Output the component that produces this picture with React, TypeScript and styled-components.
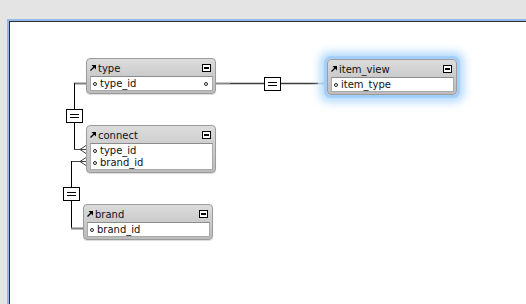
import React from 'react'
import styled, { createGlobalStyle } from 'styled-components'

// canvas content origin in page coordinates (window offset + border)
const OX = 9
const OY = 21

interface ITableField {
  name: string
  /** field is matched on the right side of the box */
  rightKey?: boolean
}

interface ITable {
  title: string
  x: number
  y: number
  fields: ITableField[]
  selected?: boolean
}

const tables: ITable[] = [
  { title: 'type', x: 86, y: 58, fields: [{ name: 'type_id', rightKey: true }] },
  { title: 'connect', x: 86, y: 125, fields: [{ name: 'type_id' }, { name: 'brand_id' }] },
  { title: 'brand', x: 83, y: 204, fields: [{ name: 'brand_id' }] },
  { title: 'item_view', x: 327, y: 59, fields: [{ name: 'item_type' }], selected: true }
]

const GlobalStyle = createGlobalStyle`
  html, body {
    margin: 0;
    padding: 0;
    background: #e4e4e4;
    overflow: hidden;
  }
  body {
    font-family: "DejaVu Sans", "Lucida Grande", sans-serif;
  }
`

const StyledWindow = styled.div`
  width: 526px;
  height: 304px;
  box-sizing: border-box;
  padding: 19px 0 0 7px;
  background: #e4e4e4;
`

const StyledCanvas = styled.div`
  position: relative;
  height: 100%;
  box-sizing: border-box;
  background: #fff;
  border-top: 2px solid #92b9e8;
  border-left: 2px solid #92b9e8;
  box-shadow: inset 1px 1px 0 #2f2f2f;
  overflow: hidden;
`

const StyledLines = styled.svg`
  position: absolute;
  left: 0;
  top: 0;
  width: 100%;
  height: 100%;
`

const StyledTable = styled.div<{ $x: number; $y: number; $selected?: boolean }>`
  position: absolute;
  left: ${(p) => p.$x - OX}px;
  top: ${(p) => p.$y - OY}px;
  width: 130px;
  box-sizing: border-box;
  padding: 0 2px 2px 3px;
  border: 1px solid #9c9c9c;
  border-radius: 4px;
  background: linear-gradient(#dcdcdc, #c9c9c9 55%, #bcbcbc);
  box-shadow: ${(p) => p.$selected
    ? '0 0 1px 3px rgba(160, 204, 250, 0.9), 0 0 6px 7px rgba(175, 215, 252, 0.7), 0 0 10px 9px rgba(200, 228, 254, 0.45)'
    : '0 1px 1px rgba(0, 0, 0, 0.15)'};
`

const StyledHeader = styled.div`
  display: flex;
  align-items: center;
  height: 17px;
  gap: 2px;
  font-size: 10px;
  color: #111;
`

const StyledTitle = styled.span`
  flex: 1;
  line-height: 17px;
  padding-top: 1px;
`

const StyledMinimize = styled.span`
  display: flex;
  align-items: center;
  justify-content: center;
  width: 9px;
  height: 8px;
  box-sizing: border-box;
  margin-right: 2px;
  border: 1px solid #000;
  background: #fff;

  &::after {
    content: '';
    width: 5px;
    height: 2px;
    background: #000;
  }
`

const StyledFieldList = styled.div`
  background: #fff;
  border: 1px solid #a9a9a9;
  border-top-color: #8c8c8c;
`

const StyledField = styled.div`
  display: flex;
  align-items: center;
  height: 12px;
  padding: 0 4px 0 2px;
  gap: 3px;
  font-size: 10px;
  line-height: 12px;
  color: #111;

  &:first-child {
    margin-top: 1px;
  }
`

const StyledFieldName = styled.span`
  flex: 1;
`

const StyledKey = styled.span`
  width: 4px;
  height: 4px;
  box-sizing: border-box;
  border: 1px solid #222;
  border-radius: 50%;
`

const AliasArrow = () => (
  <svg width='6' height='6' viewBox='0 0 6 6'>
    <polygon points='1.5,0 6,0 6,4.5' fill='#000' />
    <line x1='0.5' y1='5.5' x2='4.5' y2='1.5' stroke='#000' strokeWidth='1.3' />
  </svg>
)

const EqualsBox = ({ x, y }: { x: number; y: number }) => (
  <g>
    <rect x={x + 0.5} y={y + 0.5} width={16} height={13} fill='#fff' stroke='#000' />
    <line x1={x + 4} x2={x + 13} y1={y + 5.5} y2={y + 5.5} stroke='#000' />
    <line x1={x + 4} x2={x + 13} y1={y + 8.5} y2={y + 8.5} stroke='#000' />
  </g>
)

const CrowFoot = ({ x, y, color = '#444' }: { x: number; y: number; color?: string }) => (
  <g stroke={color} fill='none' strokeWidth='1'>
    <line x1={x} y1={y} x2={x + 6} y2={y - 4} />
    <line x1={x} y1={y} x2={x + 6} y2={y + 4} />
  </g>
)

const Relationships = () => (
  <StyledLines>
    <g transform={`translate(${-OX}, ${-OY})`}>
      {/* type -> item_view */}
      <line x1={216} y1={83.5} x2={230} y2={83.5} stroke='#8a8a8a' strokeWidth='2' />
      <line x1={230} y1={83.5} x2={318} y2={83.5} stroke='#3c3c3c' strokeWidth='1.4' />
      <line x1={318} y1={83.5} x2={327} y2={83.5} stroke='#8fa9c6' strokeWidth='1.4' />
      <CrowFoot x={321} y={83.5} color='#8fb0d4' />
      <EqualsBox x={264} y={77} />

      {/* type -> connect */}
      <line x1={74} y1={83.5} x2={86} y2={83.5} stroke='#808080' strokeWidth='2' />
      <line x1={74.5} y1={83} x2={74.5} y2={150} stroke='#000' />
      <line x1={74} y1={149.5} x2={86} y2={149.5} stroke='#444' />
      <CrowFoot x={80} y={149.5} />
      <EqualsBox x={66} y={109} />

      {/* connect -> brand */}
      <line x1={71} y1={161.5} x2={86} y2={161.5} stroke='#444' />
      <CrowFoot x={80} y={161.5} />
      <line x1={71.5} y1={161} x2={71.5} y2={229} stroke='#000' />
      <line x1={71} y1={228.5} x2={83} y2={228.5} stroke='#808080' strokeWidth='2' />
      <EqualsBox x={63} y={187} />
    </g>
  </StyledLines>
)

const Table = ({ table }: { table: ITable }) => (
  <StyledTable $x={table.x} $y={table.y} $selected={table.selected}>
    <StyledHeader>
      <AliasArrow />
      <StyledTitle>{table.title}</StyledTitle>
      <StyledMinimize />
    </StyledHeader>
    <StyledFieldList>
      {table.fields.map((field) => (
        <StyledField key={field.name}>
          <StyledKey />
          <StyledFieldName>{field.name}</StyledFieldName>
          {field.rightKey && <StyledKey />}
        </StyledField>
      ))}
    </StyledFieldList>
  </StyledTable>
)

export default function App() {
  return (
    <StyledWindow>
      <GlobalStyle />
      <StyledCanvas>
        <Relationships />
        {tables.map((table) => <Table key={table.title} table={table} />)}
      </StyledCanvas>
    </StyledWindow>
  )
}
